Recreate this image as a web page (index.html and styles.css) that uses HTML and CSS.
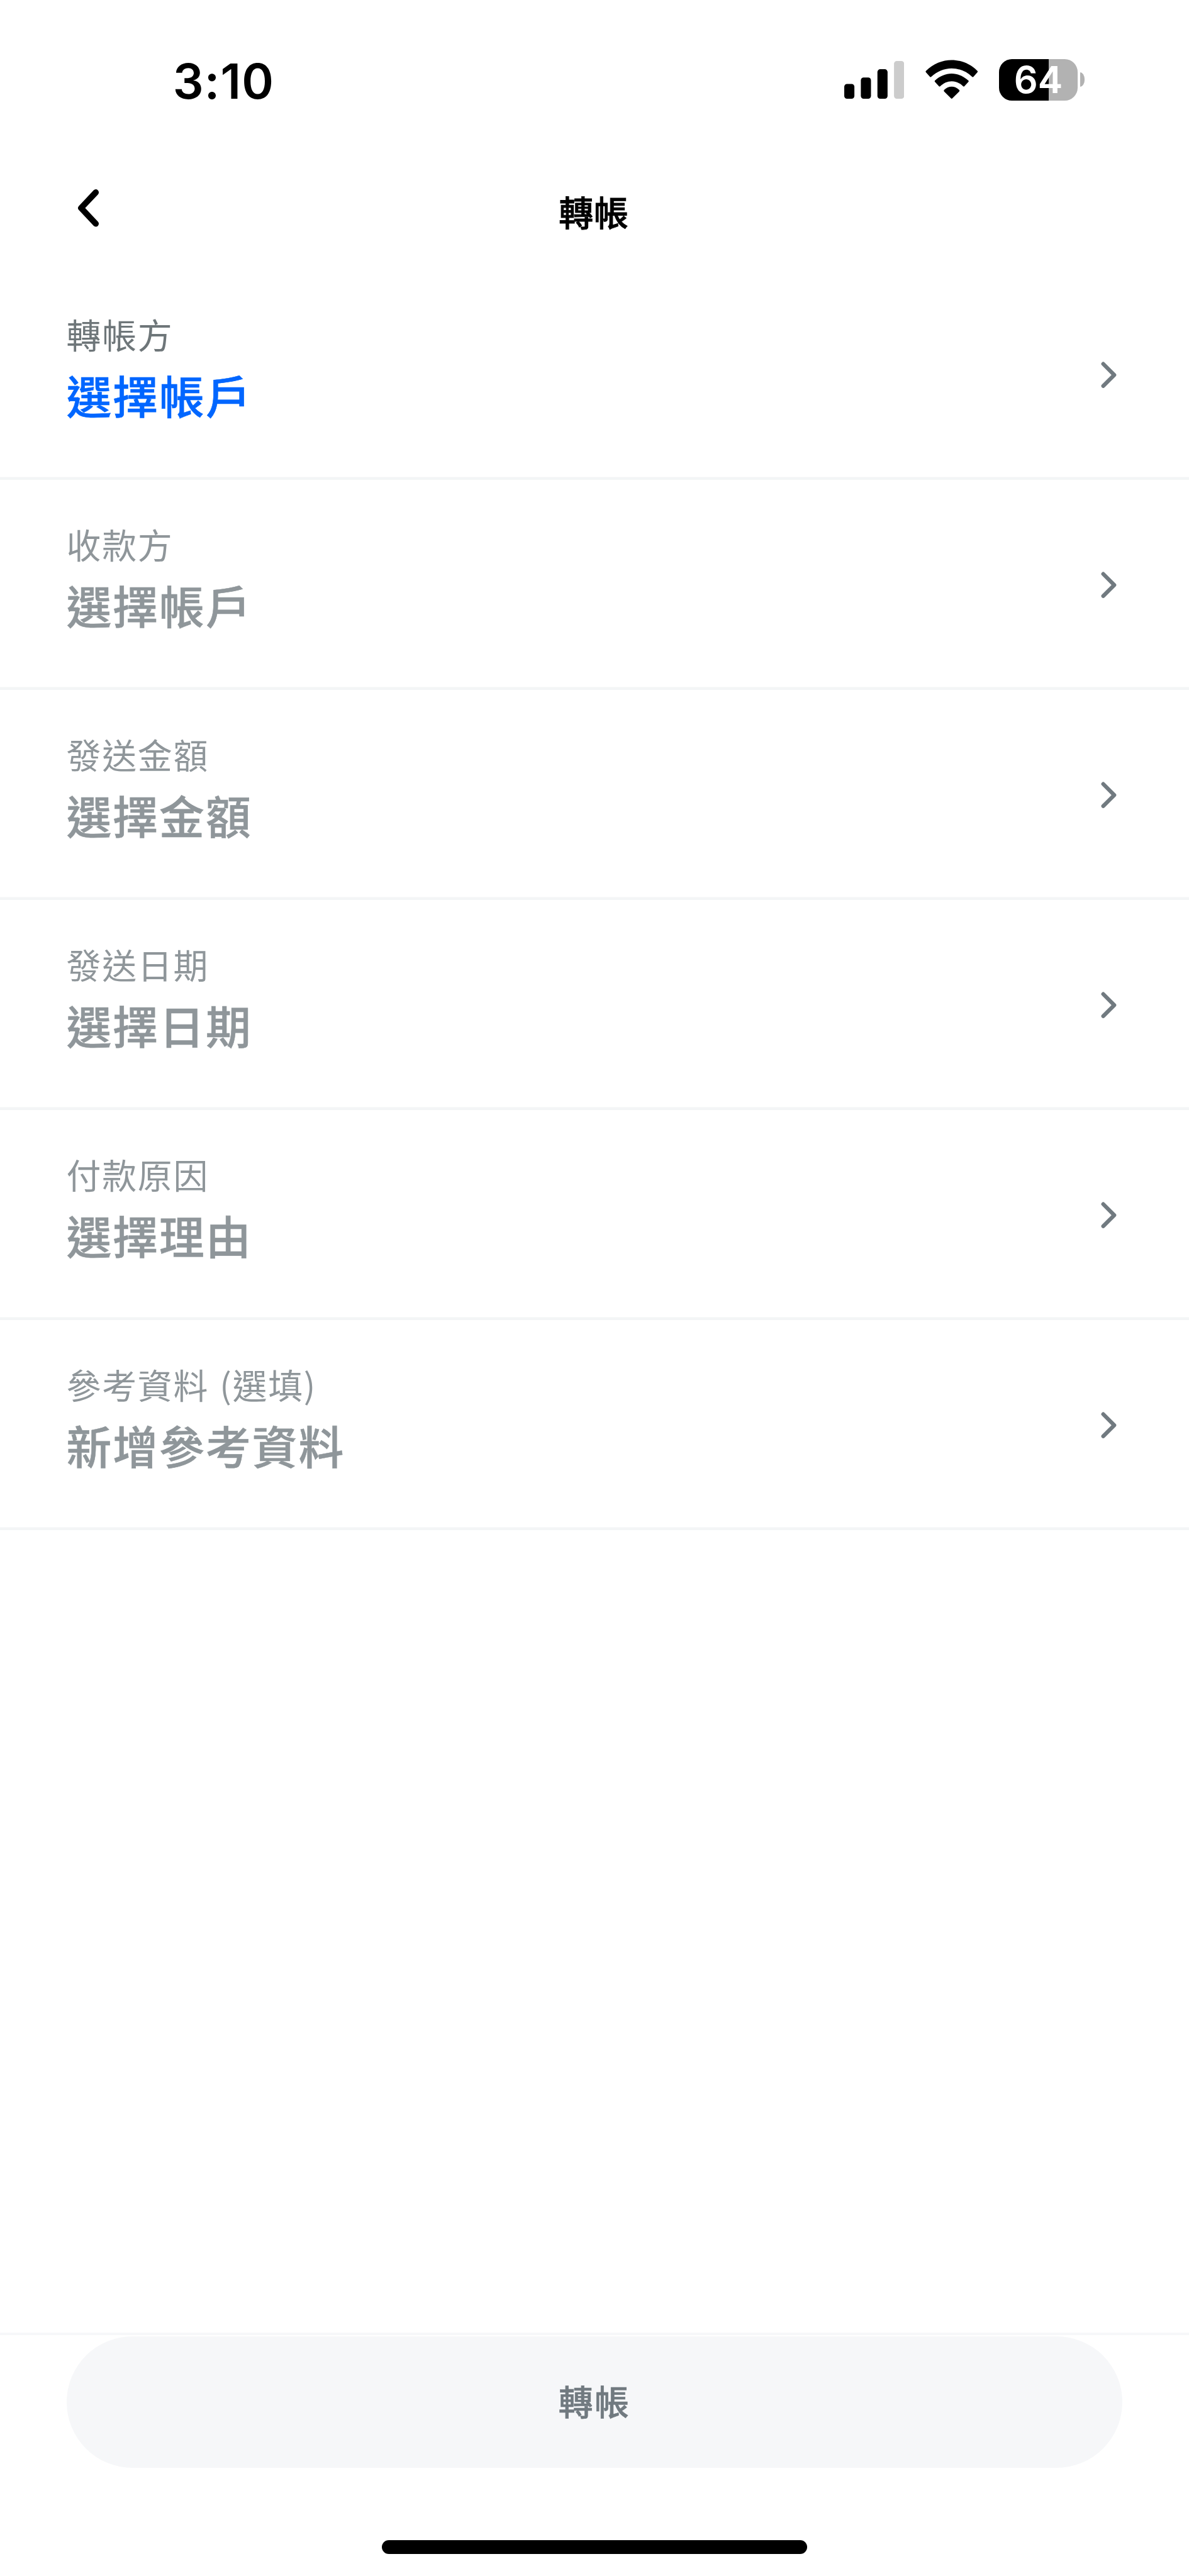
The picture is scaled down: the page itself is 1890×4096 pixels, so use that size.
FILE: index.html
```html
<!DOCTYPE html>
<html lang="zh-Hant">
<head>
<meta charset="utf-8">
<title>轉帳</title>
<link rel="stylesheet" href="styles.css">
</head>
<body>
<div class="screen">
  <header class="status-bar">
    <div class="clock">3:10</div>
    <div class="indicators">
      <svg class="signal" viewBox="0 0 130 90" aria-hidden="true">
        <rect x="0" y="54" width="22" height="32" rx="6"/>
        <rect x="36" y="40" width="22" height="46" rx="6"/>
        <rect x="72" y="22" width="22" height="64" rx="6"/>
        <rect x="108" y="4" width="22" height="82" rx="6" fill="#ccc"/>
      </svg>
      <svg class="wifi" viewBox="0 0 114 90" aria-hidden="true">
        <path d="M1.2 25.5C17 10 37 2 57 2S97 10 112.800 25.500Q114.200 27 112.800 28.500L104 38.500Q103 39.700 101.600 38.400C89 26.500 73 20 57 20S25 26.500 12.400 38.400Q11 39.700 10 38.500L1.200 28.500Q-.2 27 1.200 25.500Z"/>
        <path d="M20.800 46.500C31 37 44 31.500 57 31.500S83 37 93.200 46.500Q94.600 48 93.200 49.600L84.500 59.200Q83.300 60.500 82 59.200C75 52 66 48 57 48S39 52 32 59.200Q30.700 60.500 29.500 59.200L20.800 49.600Q19.400 48 20.800 46.500Z"/>
        <path d="M40.600 67C45.500 62 51 59.600 57 59.600S68.500 62 73.400 67Q74.700 68.700 73.400 70.200L58.200 85.300Q57 86.500 55.800 85.300L40.600 70.200Q39.300 68.700 40.600 67Z"/>
      </svg>
      <div class="battery">
        <div class="battery-body">64</div>
        <div class="battery-cap"></div>
      </div>
    </div>
  </header>

  <nav class="nav-bar">
    <svg class="back" viewBox="0 0 48 84" aria-hidden="true"><path d="M40 8L8 42L40 76"/></svg>
    <h1 class="title">轉帳</h1>
  </nav>

  <main class="rows">
    <section class="row active">
      <div class="text"><div class="label">轉帳方</div><div class="value">選擇帳戶</div></div>
      <svg class="chevron" viewBox="0 0 34 58" aria-hidden="true"><path d="M5 5L29 29L5 53"/></svg>
    </section>
    <section class="row">
      <div class="text"><div class="label">收款方</div><div class="value">選擇帳戶</div></div>
      <svg class="chevron" viewBox="0 0 34 58" aria-hidden="true"><path d="M5 5L29 29L5 53"/></svg>
    </section>
    <section class="row">
      <div class="text"><div class="label">發送金額</div><div class="value">選擇金額</div></div>
      <svg class="chevron" viewBox="0 0 34 58" aria-hidden="true"><path d="M5 5L29 29L5 53"/></svg>
    </section>
    <section class="row">
      <div class="text"><div class="label">發送日期</div><div class="value">選擇日期</div></div>
      <svg class="chevron" viewBox="0 0 34 58" aria-hidden="true"><path d="M5 5L29 29L5 53"/></svg>
    </section>
    <section class="row">
      <div class="text"><div class="label">付款原因</div><div class="value">選擇理由</div></div>
      <svg class="chevron" viewBox="0 0 34 58" aria-hidden="true"><path d="M5 5L29 29L5 53"/></svg>
    </section>
    <section class="row">
      <div class="text"><div class="label">參考資料 (選填)</div><div class="value">新增參考資料</div></div>
      <svg class="chevron" viewBox="0 0 34 58" aria-hidden="true"><path d="M5 5L29 29L5 53"/></svg>
    </section>
  </main>

  <footer class="footer">
    <button class="submit" type="button" disabled>轉帳</button>
    <div class="home-indicator"></div>
  </footer>
</div>
</body>
</html>
```
FILE: styles.css
```css
:root {
  --u: 0.73252px;
  --line: #f3f5f6;
  --muted: #8f969a;
  --icon: #717a80;
}

* { box-sizing: border-box; }

body {
  margin: 0;
  background: #fff;
  font-family: "Noto Sans CJK TC", sans-serif;
}

svg { display: block; flex: none; }

.screen {
  display: flex;
  flex-direction: column;
  width: 1890px;
  height: 4096px;
  overflow: hidden;
}

/* status bar */
.status-bar {
  display: flex;
  justify-content: space-between;
  align-items: flex-start;
  height: calc(var(--u) * 354);
  padding: calc(var(--u) * 128) calc(var(--u) * 226) 0 calc(var(--u) * 375);
  font-family: Inter, sans-serif;
}

.clock {
  font-size: calc(var(--u) * 105);
  font-weight: 600;
  line-height: calc(var(--u) * 96);
  letter-spacing: calc(var(--u) * 1.6);
}

.indicators { display: flex; }

.signal { width: calc(var(--u) * 130); height: calc(var(--u) * 90); }

.wifi {
  width: calc(var(--u) * 114);
  height: calc(var(--u) * 90);
  margin-left: calc(var(--u) * 46);
}

.battery {
  display: flex;
  align-items: center;
  gap: calc(var(--u) * 6);
  margin-left: calc(var(--u) * 46);
}

.battery-body {
  width: calc(var(--u) * 170);
  height: calc(var(--u) * 90);
  border-radius: calc(var(--u) * 28);
  background: linear-gradient(90deg, #000 63.5%, #b2b2b2 63.5%);
  color: #fff;
  font-size: calc(var(--u) * 81);
  font-weight: 600;
  line-height: calc(var(--u) * 90);
  text-align: center;
}

.battery-cap {
  width: calc(var(--u) * 10);
  height: calc(var(--u) * 31);
  border-radius: 0 calc(var(--u) * 10) calc(var(--u) * 10) 0 / 0 50% 50% 0;
  background: #b2b2b2;
}

/* navigation */
.nav-bar {
  display: grid;
  grid-template-columns: calc(var(--u) * 48) 1fr calc(var(--u) * 48);
  align-items: start;
  height: calc(var(--u) * 232);
  padding: calc(var(--u) * 56) calc(var(--u) * 171) 0 calc(var(--u) * 168);
}

.back {
  width: calc(var(--u) * 48);
  height: calc(var(--u) * 84);
  fill: none;
  stroke: #000;
  stroke-width: 13;
  stroke-linecap: round;
  stroke-linejoin: round;
}

.title {
  margin: 0;
  font-size: calc(var(--u) * 75);
  font-weight: 500;
  line-height: calc(var(--u) * 96);
  letter-spacing: calc(var(--u) * 1);
  text-align: center;
  -webkit-text-stroke: calc(var(--u) * 1.2) currentColor;
}

/* form rows */
.row {
  display: flex;
  justify-content: space-between;
  align-items: center;
  height: calc(var(--u) * 456);
  padding: 0 calc(var(--u) * 157) 0 calc(var(--u) * 144);
  box-shadow: inset 0 calc(var(--u) * -6) var(--line);
}

.text {
  height: calc(var(--u) * 298);
  color: var(--muted);
}

.label {
  font-size: calc(var(--u) * 75);
  line-height: calc(var(--u) * 120);
  letter-spacing: calc(var(--u) * 2.4);
  word-spacing: calc(var(--u) * 4);
}

.value {
  font-size: calc(var(--u) * 98);
  font-weight: 500;
  line-height: calc(var(--u) * 144.5);
  letter-spacing: calc(var(--u) * 2.8);
  -webkit-text-stroke: calc(var(--u) * 0.8) currentColor;
}

.active .label { color: #6e7679; }
.active .value { color: #06f; }

.chevron {
  width: calc(var(--u) * 34);
  height: calc(var(--u) * 58);
  fill: none;
  stroke: var(--icon);
  stroke-width: 8.5;
  stroke-linecap: round;
  stroke-linejoin: round;
}

/* footer */
.footer {
  display: flex;
  flex-direction: column;
  align-items: center;
  height: calc(var(--u) * 528);
  margin-top: auto;
  border-top: calc(var(--u) * 6) solid #f6f7f9;
  padding-top: calc(var(--u) * 2);
}

.submit {
  width: calc(var(--u) * 2292);
  height: calc(var(--u) * 286);
  padding: 0 0 calc(var(--u) * 9);
  border: 0;
  border-radius: calc(var(--u) * 143);
  background: #f6f7f9;
  color: var(--icon);
  font-family: inherit;
  font-size: calc(var(--u) * 75);
  font-weight: 500;
  letter-spacing: calc(var(--u) * 3);
  -webkit-text-stroke: calc(var(--u) * 0.8) currentColor;
}

.home-indicator {
  width: calc(var(--u) * 924);
  height: calc(var(--u) * 30);
  margin-top: calc(var(--u) * 156.6);
  border-radius: calc(var(--u) * 15);
  background: #000;
}
```
